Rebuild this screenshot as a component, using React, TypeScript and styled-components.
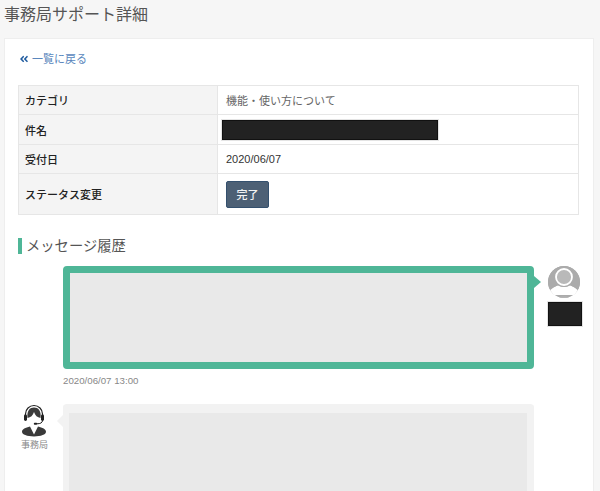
import React from "react";
import styled, { createGlobalStyle } from "styled-components";
import { FaAngleDoubleLeft } from "react-icons/fa";

const Global = createGlobalStyle`
  html, body { margin: 0; padding: 0; height: 491px; overflow: hidden; background: #f6f6f6; }
  body { font-family: "Liberation Sans", "Noto Sans CJK JP", sans-serif; color: #333; }
  * { box-sizing: border-box; }
`;

const Page = styled.div`
  width: 600px;
  height: 491px;
  overflow: hidden;
  padding: 0 6px 0 4px;
`;

const Title = styled.h1`
  margin: 0;
  height: 38px;
  padding: 4px 0 0 0;
  font-size: 16px;
  line-height: 22px;
  font-weight: 400;
  color: #555;
`;

const Card = styled.main`
  background: #fff;
  border: 1px solid #eeeeee;
  padding: 12px 14px 0 13px;
  height: 460px;
`;

const BackLink = styled.a`
  display: flex;
  align-items: center;
  gap: 3px;
  height: 16px;
  margin-bottom: 18px;
  padding-left: 1px;
  font-size: 11px;
  line-height: 16px;
  color: #5a87bd;
  svg { color: #1f5b9f; width: 10px; height: 10px; }
`;

const Table = styled.table`
  width: 561px;
  border-collapse: collapse;
  table-layout: fixed;
  font-size: 11px;
  margin-bottom: 23px;
`;

const Row = styled.tr<{ $h: number }>`
  height: ${(p) => p.$h}px;
`;

const Head = styled.th`
  width: 199px;
  background: #f4f4f4;
  border: 1px solid #e6e6e6;
  padding: 0 6px;
  text-align: left;
  font-weight: 500;
  font-family: "Noto Sans CJK JP", sans-serif;
  color: #222;
`;

const Cell = styled.td<{ $tight?: boolean; $soft?: boolean }>`
  border: 1px solid #e6e6e6;
  padding: ${(p) => (p.$tight ? "0 4px" : "0 8px")};
  color: ${(p) => (p.$soft ? "#666" : "#333")};
`;

const Redacted = styled.div<{ $w: number; $h: number }>`
  width: ${(p) => p.$w}px;
  height: ${(p) => p.$h}px;
  background: #222;
  border: 1px solid #111;
  outline: 1px solid #e4e4e4;
`;

const Button = styled.button`
  display: block;
  width: 43px;
  height: 27px;
  padding: 0;
  background: #4d6075;
  border: 1px solid #34506e;
  border-radius: 2px;
  color: #f4f4f4;
  font: 500 11px "Noto Sans CJK JP", sans-serif;
`;

const SectionTitle = styled.h2`
  margin: 0 0 12px;
  height: 16px;
  border-left: 4px solid #4fb697;
  padding-left: 4px;
  font-size: 14.3px;
  line-height: 16px;
  font-weight: 400;
  color: #555;
`;

const Message = styled.section`
  display: grid;
  grid-template-columns: 45px 471px 45px;
  align-items: start;
`;

const Bubble = styled.div<{ $mine?: boolean }>`
  position: relative;
  height: ${(p) => (p.$mine ? "103px" : "200px")};
  background: #e9e9e9;
  border-style: solid;
  border-color: ${(p) => (p.$mine ? "#4fb697" : "#f2f2f2")};
  border-width: ${(p) => (p.$mine ? "7px" : "9px 7px 0 6px")};
  border-radius: 4px;
  &::after {
    content: "";
    position: absolute;
    border-style: solid;
    border-color: transparent;
    ${(p) =>
      p.$mine
        ? `top: 3px; right: -14px; border-width: 6px 0 6px 7px; border-left-color: #4fb697;`
        : `top: 2px; left: -12px; border-width: 6px 6px 6px 0; border-right-color: #f2f2f2;`}
  }
`;

const RightSide = styled.div`
  display: flex;
  flex-direction: column;
  gap: 4px;
  padding-left: 14px;
`;

const Stamp = styled.div`
  grid-column: 2;
  margin-top: 5px;
  height: 14px;
  font-size: 9.7px;
  line-height: 14px;
  color: #888;
`;

const Staff = styled.div`
  display: flex;
  flex-direction: column;
  align-items: flex-start;
  padding: 0 0 0 3px;
  font-size: 9px;
  line-height: 12px;
  color: #888;
`;

const StaffLabel = styled.span`
  margin-top: 2px;
  padding-left: 0;
  font-family: "Noto Sans CJK JP", sans-serif;
`;

const Second = styled(Message)`
  margin-top: 16px;
`;

const UserIcon = () => (
  <svg width="32" height="32" viewBox="0 0 32 32">
    <defs>
      <clipPath id="c"><circle cx="16" cy="16" r="16" /></clipPath>
    </defs>
    <g clipPath="url(#c)">
      <rect width="32" height="32" fill="#ababab" />
      <path d="M0 28C2 23 6 21 10 19.500c4 2 8 2 12 0 4 1.500 8 3.500 10 8.500v1H0z" fill="#fff" />
      <path d="M0 25C3 22 7 20.500 10 19c4 2.500 8 2.500 12 0 3 1.500 7 3 10 6v-25H0z" fill="#ababab" />
      <circle cx="16" cy="11" r="8" fill="#b9b9b9" stroke="#fff" strokeWidth="1.800" />
      <path d="M0 25c5 3 26 3 32 0v4H0z" fill="#fff" />
      <path d="M8 32c4-2 12-2 16 0z" fill="#b5b5b5" />
    </g>
  </svg>
);

const StaffIcon = () => (
  <svg width="26" height="33" viewBox="0 0 26 33">
    <path d="M4.500 14V10a8.500 8.500 0 0 1 17 0v4" fill="none" stroke="#222" strokeWidth="1.200" />
    <path d="M6.500 14C5.500 6.500 9 3.500 13 3.500s7.500 3 6.500 10.500c-3-.5-5.500-2.500-6.500-6-1 3.500-3.500 5.500-6.500 6z" fill="#3c3c3c" />
    <rect x="3" y="10.500" width="3" height="6.500" rx="1.400" fill="#222" />
    <rect x="20" y="10.500" width="3" height="6.500" rx="1.400" fill="#222" />
    <path d="M21.500 16.500c0 2.300-2.200 3.300-5.500 3.300" fill="none" stroke="#222" strokeWidth="1" />
    <rect x="12.800" y="18.800" width="3.400" height="1.900" rx=".9" fill="#222" />
    <path d="M9 22.500C4.500 23.800 1 25 1 27.800c0 2.700 5 4.700 12 4.700s12-2 12-4.700c0-2.800-3.500-4-8-5.300L13 30.500z" fill="#3a3a3a" />
  </svg>
);

export default function App() {
  return (
    <Page>
      <Global />
      <Title>事務局サポート詳細</Title>
      <Card>
        <BackLink>
          <FaAngleDoubleLeft />
          一覧に戻る
        </BackLink>
        <Table>
          <tbody>
            <Row $h={29}>
              <Head>カテゴリ</Head>
              <Cell $soft>機能・使い方について</Cell>
            </Row>
            <Row $h={30}>
              <Head>件名</Head>
              <Cell $tight>
                <Redacted $w={216} $h={20} />
              </Cell>
            </Row>
            <Row $h={29}>
              <Head>受付日</Head>
              <Cell>2020/06/07</Cell>
            </Row>
            <Row $h={41}>
              <Head>ステータス変更</Head>
              <Cell>
                <Button>完了</Button>
              </Cell>
            </Row>
          </tbody>
        </Table>
        <SectionTitle>メッセージ履歴</SectionTitle>
        <Message>
          <span />
          <Bubble $mine />
          <RightSide>
            <UserIcon />
            <Redacted $w={34} $h={24} />
          </RightSide>
          <Stamp>2020/06/07 13:00</Stamp>
        </Message>
        <Second>
          <Staff>
            <StaffIcon />
            <StaffLabel>事務局</StaffLabel>
          </Staff>
          <Bubble />
        </Second>
      </Card>
    </Page>
  );
}
